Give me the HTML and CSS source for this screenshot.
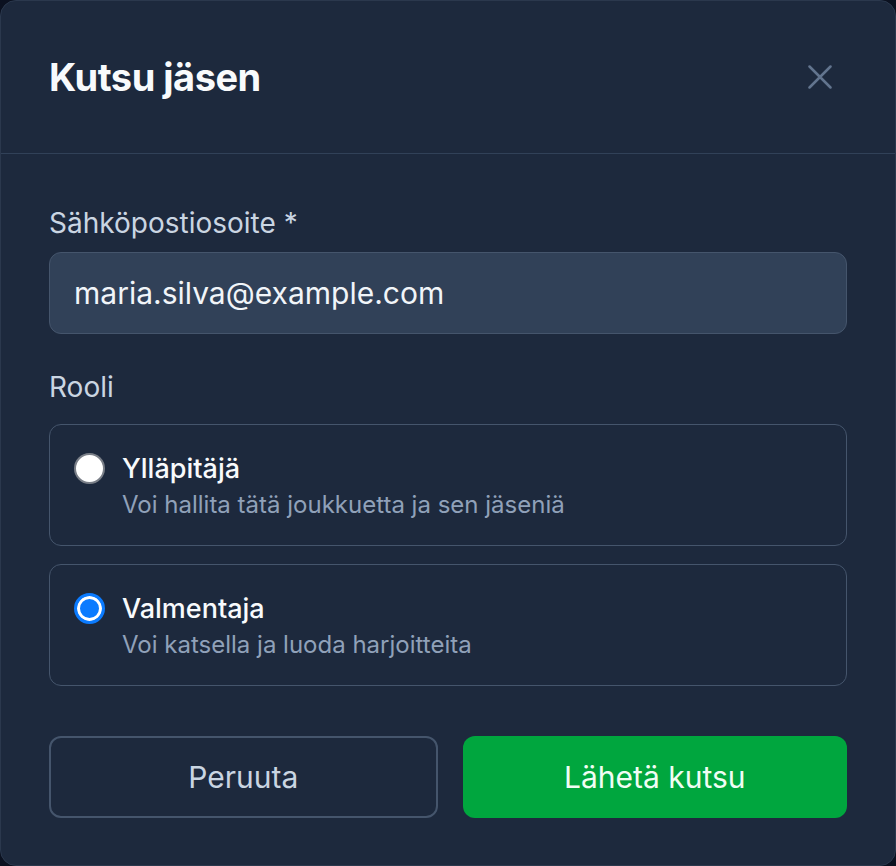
FILE: index.html
```html
<!DOCTYPE html>
<html lang="fi">
<head>
  <meta charset="UTF-8">
  <title>Kutsu jäsen</title>
  <link rel="stylesheet" href="styles.css">
</head>
<body>

<div class="dialog">
  <!-- HEADER -->
  <div class="dialog-header">
    <h2>Kutsu jäsen</h2>
    <button class="close-btn" aria-label="Sulje">
      <svg width="24" height="24" viewBox="0 0 24 24" fill="none" stroke="currentColor" stroke-width="2.5" stroke-linecap="round">
        <path d="M1.5 1.5 L22.5 22.5 M22.5 1.5 L1.5 22.5"/>
      </svg>
    </button>
  </div>

  <!-- BODY -->
  <div class="dialog-body">
    <label class="field-label email-label" for="email">Sähköpostiosoite *</label>
    <input type="email" id="email" class="text-input" value="maria.silva@example.com">

    <div class="field-label role-label">Rooli</div>
    <div class="role-list">
      <label class="role-card">
        <input type="radio" name="role" value="admin">
        <span class="role-text">
          <span class="role-title">Ylläpitäjä</span>
          <span class="role-desc">Voi hallita tätä joukkuetta ja sen jäseniä</span>
        </span>
      </label>
      <label class="role-card">
        <input type="radio" name="role" value="coach" checked>
        <span class="role-text">
          <span class="role-title">Valmentaja</span>
          <span class="role-desc">Voi katsella ja luoda harjoitteita</span>
        </span>
      </label>
    </div>

    <div class="actions">
      <button class="btn btn-cancel">Peruuta</button>
      <button class="btn btn-submit">Lähetä kutsu</button>
    </div>
  </div>
</div>

</body>
</html>
```

FILE: styles.css
```css
* {
  box-sizing: border-box;
}
body {
  margin: 0;
  background: #0b1120;
  font-family: Inter, "Noto Sans", Arial, sans-serif;
}
.dialog {
  width: 896px;
  height: 866px;
  background: #1d293d;
  border: 1px solid #2b384d;
  border-radius: 16px;
  overflow: hidden;
}
.dialog-header {
  display: flex;
  align-items: center;
  justify-content: space-between;
  padding: 48px 48px;
  border-bottom: 1px solid #314158;
}
.dialog-header h2 {
  margin: 0;
  font-size: 38px;
  line-height: 56px;
  font-weight: 700;
  letter-spacing: -0.5px;
  color: #f8fafc;
}
.close-btn {
  width: 40px;
  height: 40px;
  margin-right: 7px;
  padding: 0;
  border: none;
  background: none;
  color: #62748e;
  display: flex;
  align-items: center;
  justify-content: center;
  cursor: pointer;
}
.dialog-body {
  padding: 49px 48px 48px;
}
.field-label {
  display: block;
  font-size: 28px;
  line-height: 40px;
  color: #cad5e2;
}
.email-label {
  margin-bottom: 9px;
}
.role-label {
  margin-top: 33px;
  margin-bottom: 17px;
}
.text-input {
  display: block;
  width: 100%;
  height: 82px;
  padding: 16px 24px;
  font-family: inherit;
  font-size: 30px;
  color: #f1f5f9;
  background: #314158;
  border: 1px solid #45556c;
  border-radius: 12px;
  outline: none;
}
.role-list {
  display: flex;
  flex-direction: column;
  gap: 18px;
}
.role-card {
  display: flex;
  align-items: flex-start;
  gap: 17px;
  padding: 24px;
  border: 1px solid #45556c;
  border-radius: 12px;
  cursor: pointer;
}
.role-card input {
  appearance: none;
  width: 31px;
  height: 31px;
  margin: 4px 0 0;
  border: 2px solid #7a7f88;
  border-radius: 50%;
  background: #fff;
  flex-shrink: 0;
}
.role-card input:checked {
  border: 3px solid #0b7bff;
  background: #0b7bff;
  box-shadow: inset 0 0 0 3px #fff;
}
.role-text {
  display: flex;
  flex-direction: column;
}
.role-title {
  font-size: 27px;
  line-height: 40px;
  font-weight: 500;
  color: #f8fafc;
}
.role-desc {
  font-size: 24px;
  line-height: 32px;
  color: #90a1b9;
}
.actions {
  display: flex;
  gap: 25px;
  margin-top: 50px;
}
.btn {
  flex: 1;
  height: 82px;
  font-family: inherit;
  font-size: 30px;
  border-radius: 12px;
  cursor: pointer;
}
.btn-cancel {
  background: transparent;
  color: #cad5e2;
  border: 2px solid #45556c;
}
.btn-submit {
  background: #00a63e;
  color: #f0fdf4;
  border: none;
}
```
